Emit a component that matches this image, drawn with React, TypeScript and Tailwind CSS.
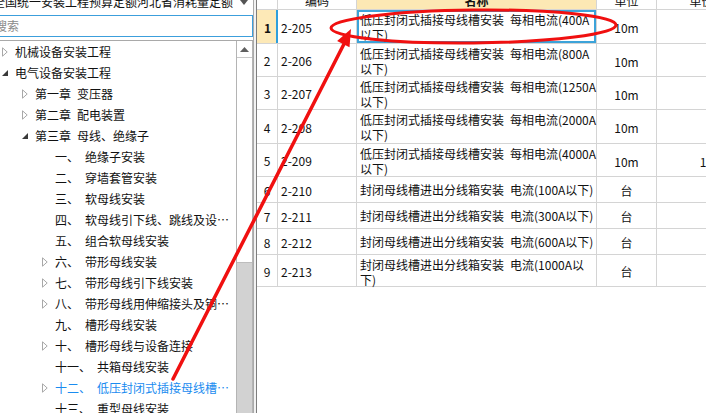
import React from 'react'

type Node = {
  level: 0 | 1 | 2
  arrow?: 'open' | 'closed'
  num?: string
  label: string
  selected?: boolean
}

const tree: Node[] = [
  { level: 0, arrow: 'closed', label: '机械设备安装工程' },
  { level: 0, arrow: 'open', label: '电气设备安装工程' },
  { level: 1, arrow: 'closed', num: '第一章', label: '变压器' },
  { level: 1, arrow: 'closed', num: '第二章', label: '配电装置' },
  { level: 1, arrow: 'open', num: '第三章', label: '母线、绝缘子' },
  { level: 2, num: '一、', label: '绝缘子安装' },
  { level: 2, num: '二、', label: '穿墙套管安装' },
  { level: 2, num: '三、', label: '软母线安装' },
  { level: 2, num: '四、', label: '软母线引下线、跳线及设备连线' },
  { level: 2, num: '五、', label: '组合软母线安装' },
  { level: 2, arrow: 'closed', num: '六、', label: '带形母线安装' },
  { level: 2, arrow: 'closed', num: '七、', label: '带形母线引下线安装' },
  { level: 2, arrow: 'closed', num: '八、', label: '带形母线用伸缩接头及铜过渡板安装' },
  { level: 2, num: '九、', label: '槽形母线安装' },
  { level: 2, arrow: 'closed', num: '十、', label: '槽形母线与设备连接' },
  { level: 2, num: '十一、', label: '共箱母线安装' },
  { level: 2, arrow: 'closed', num: '十二、', label: '低压封闭式插接母线槽安装', selected: true },
  { level: 2, num: '十三、', label: '重型母线安装' },
]

interface Row {
  n: string
  code: string
  lines: string[]
  unit: string
  h: string
  price?: string
  sel?: boolean
}

// en space keeps the wider gap the grid shows between the two phrases
const rows: Row[] = [
  { n: '1', code: '2-205', lines: ['低压封闭式插接母线槽安装\u2002每相电流(400A', '以下)'], unit: '10m', h: 'h-[34px]', sel: true },
  { n: '2', code: '2-206', lines: ['低压封闭式插接母线槽安装\u2002每相电流(800A', '以下)'], unit: '10m', h: 'h-[33px]' },
  { n: '3', code: '2-207', lines: ['低压封闭式插接母线槽安装\u2002每相电流(1250A', '以下)'], unit: '10m', h: 'h-[33px]' },
  { n: '4', code: '2-208', lines: ['低压封闭式插接母线槽安装\u2002每相电流(2000A', '以下)'], unit: '10m', h: 'h-[34px]' },
  { n: '5', code: '2-209', lines: ['低压封闭式插接母线槽安装\u2002每相电流(4000A', '以下)'], unit: '10m', h: 'h-[33px]', price: '1285.87' },
  { n: '6', code: '2-210', lines: ['封闭母线槽进出分线箱安装\u2002电流(100A以下)'], unit: '台', h: 'h-[26px]' },
  { n: '7', code: '2-211', lines: ['封闭母线槽进出分线箱安装\u2002电流(300A以下)'], unit: '台', h: 'h-[26px]' },
  { n: '8', code: '2-212', lines: ['封闭母线槽进出分线箱安装\u2002电流(600A以下)'], unit: '台', h: 'h-[26px]' },
  { n: '9', code: '2-213', lines: ['封闭母线槽进出分线箱安装\u2002电流(1000A以', '下)'], unit: '台', h: 'h-[32px]' },
]

const indent = ['pl-[2px]', 'pl-[22px]', 'pl-[42px]']

function Caret({ type }: { type: 'open' | 'closed' }) {
  if (type === 'closed') {
    return (
      <svg width="6" height="10" viewBox="0 0 6 10">
        <path d="M0.5 0.8 L5.2 5 L0.5 9.2 Z" fill="none" stroke="#a8a8a8" strokeWidth="1" />
      </svg>
    )
  }
  return (
    <svg width="6" height="6" viewBox="0 0 6 6">
      <path d="M6 0 L6 6 L0 6 Z" fill="#3a3a3a" />
    </svg>
  )
}

export default function App() {
  return (
    <div className="relative flex h-[413px] w-[706px] overflow-hidden bg-white font-['Noto_Sans_CJK_SC',sans-serif] text-[12px] text-[#111]">
      {/* left: library picker + chapter tree */}
      <div className="flex w-[253px] shrink-0 flex-col">
        <div className="-mt-[9px] flex h-[22px] shrink-0 items-center">
          <span className="-ml-[7px] whitespace-nowrap leading-[22px]">全国统一安装工程预算定额河北省消耗量定额</span>
          <svg className="ml-auto mr-[5px]" width="8" height="5" viewBox="0 0 8 5">
            <path d="M0 0 L8 0 L4 5 Z" fill="#555" />
          </svg>
        </div>
        <div className="mt-[2px] flex h-[22px] shrink-0 items-center border border-l-0 border-[#3c9fdc] bg-white">
          <span className="-ml-[5px] text-[#8a8a8a]">搜索</span>
        </div>
        <div className="mt-[3px] flex min-h-0 flex-1 border-t border-[#a9a9a9]">
          <div className="w-[236px] shrink-0">
            {tree.map((t, i) => (
              <div
                key={i}
                className={`flex h-[21px] items-center pr-[5px] ${indent[t.level]} ${t.selected ? 'text-[#1a8cf0]' : ''}`}
              >
                <span className="flex w-[13px] shrink-0 items-center">{t.arrow && <Caret type={t.arrow} />}</span>
                {t.num && <span className="mr-[6px] shrink-0 whitespace-nowrap">{t.num}</span>}
                <span className="min-w-0 truncate">{t.label}</span>
              </div>
            ))}
          </div>
          {/* scrollbar */}
          <div className="flex w-[17px] shrink-0 flex-col border-x border-[#b4b4b4] bg-white">
            <div className="flex h-[17px] shrink-0 items-center justify-center border-b border-[#c8c8c8]">
              <svg width="9" height="5" viewBox="0 0 9 5">
                <path d="M0 5 L4.5 0 L9 5 Z" fill="#5f5f5f" />
              </svg>
            </div>
            <div className="h-[204px] shrink-0 bg-white" />
            <div className="flex-1 border-t border-[#bdbdbd] bg-[#d2d2d2]" />
          </div>
        </div>
      </div>

      {/* splitter */}
      <div className="w-[4px] shrink-0 border-x border-l-[#aaaaaa] border-r-[#7d7d7d] bg-[#f2f2f2]" />

      {/* right: quota table */}
      <div className="min-w-0 flex-1 overflow-hidden">
        <div className="-mt-[8px] w-[490px]">
          <div className="flex h-[18px] border-b border-[#d4d4d4]">
            <div className="w-[21px] shrink-0 border-r border-[#d4d4d4]" />
            <div className="flex w-[79px] shrink-0 items-center justify-center border-r border-[#d4d4d4]">编码</div>
            <div className="flex w-[240px] shrink-0 items-center justify-center border-r border-[#d4d4d4] bg-[#fce8b4] font-bold">名称</div>
            <div className="flex w-[60px] shrink-0 items-center justify-center border-r border-[#d4d4d4]">单位</div>
            <div className="flex w-[90px] shrink-0 items-center justify-center border-r border-[#d4d4d4]">单价</div>
          </div>
          {rows.map((r) => (
            <div key={r.n} className={`flex ${r.h} border-b border-[#d4d4d4]`}>
              <div
                className={`flex w-[21px] shrink-0 items-center justify-center pt-[2px] ${
                  r.sel
                    ? 'bg-[#fde9b7] font-bold shadow-[inset_-2px_0_0_#2f9fdc]'
                    : 'border-r border-[#d4d4d4]'
                }`}
              >
                {r.n}
              </div>
              <div className="flex w-[79px] shrink-0 items-center border-r border-[#d4d4d4] pl-[3px] pt-[2px]">{r.code}</div>
              <div
                className={`flex w-[240px] shrink-0 flex-col border-r border-[#d4d4d4] pl-[3px] leading-[15px] ${
                  r.lines.length > 1 ? 'pt-[2px]' : 'justify-center'
                } ${r.sel ? 'shadow-[inset_0_0_0_2px_#3ca3d9]' : ''}`}
              >
                {r.lines.map((l, i) => (
                  <span key={i} className="whitespace-nowrap">
                    {l}
                  </span>
                ))}
              </div>
              <div className="flex w-[60px] shrink-0 items-center justify-center border-r border-[#d4d4d4] pt-[3px]">{r.unit}</div>
              <div className="flex w-[90px] shrink-0 items-center justify-end border-r border-[#d4d4d4] pr-[3px] pt-[3px]">
                {r.price}
              </div>
            </div>
          ))}
        </div>
      </div>

      {/* red annotation drawn over the screenshot */}
      <svg className="pointer-events-none absolute left-0 top-0" width="706" height="413" viewBox="0 0 706 413">
        <ellipse cx="473.5" cy="26.5" rx="142.5" ry="16.5" fill="none" stroke="#f01010" strokeWidth="3" transform="rotate(-0.6 473.5 26.5)" />
        <line x1="173" y1="379" x2="345" y2="42" stroke="#f01010" strokeWidth="3.5" strokeLinecap="round" />
        <polygon points="351,29 349.5,47.3 337.1,40.9" fill="#f01010" />
      </svg>
    </div>
  )
}
